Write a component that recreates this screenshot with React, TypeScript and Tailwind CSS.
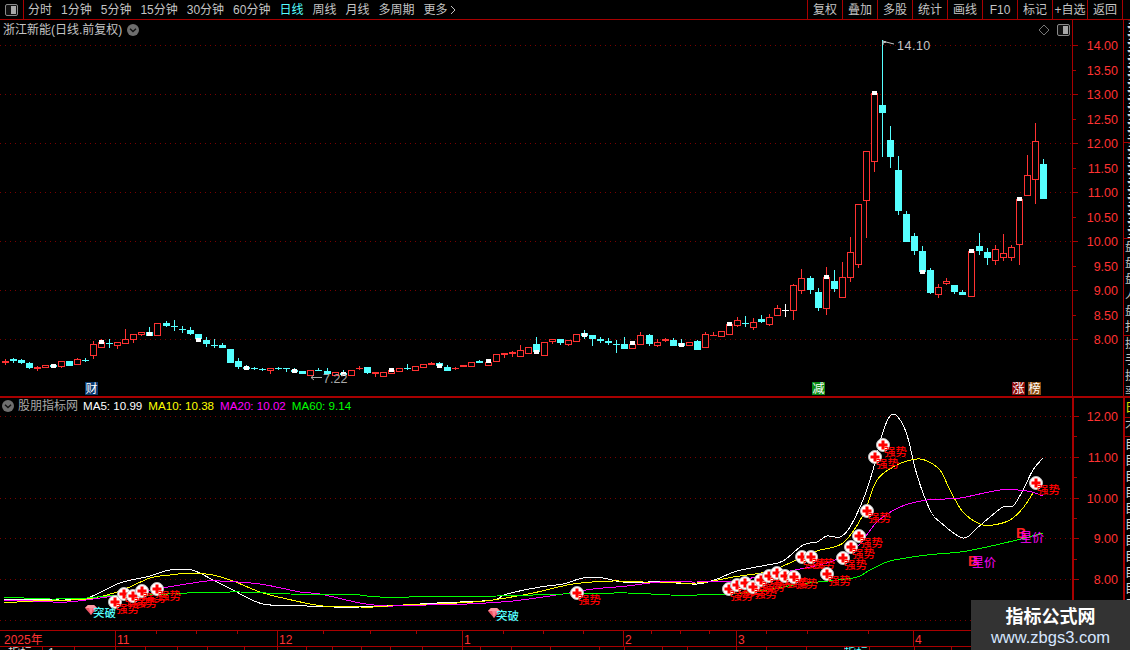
import React from "react";

type C = [string, number, number, number?, number?, number?];
const A: C[] = [
["r",152,158,146,164],["c",147,153,143,158],["c",150,158,148,162],["c",158,173,155,178],["r",171,176,168,182],["h",166,172],["c",165,171,163,173,163],["h",152,167,152,173],["c",153,167],["h",148,163,145,163],
["c",150,150,143,157],["h",103,136,94,146],["h",95,110,87,113,91],["c",100,100,87,113],["h",97,104,97,117],["h",88,98,57,98],["h",73,88,73,98],["h",65,72,65,77],["c",66,77,50,77,66],["h",40,74],
["c",38,48,32,52],["c",49,49,30,62],["c",57,57,47,68],["c",60,72,52,75],["c",72,86,72,90,83],["c",90,103,82,110],["c",105,105,88,113],["c",105,113,100,113],["c",117,159],["c",152,170,145,176],
["c",170,178,165,178,169],["c",174,178,170,180],["c",178,178,173,183],["h",175,181,175,191],["c",174,174,170,179],["c",175,175,175,186],["c",180,186,174,186,178],["c",183,193],["h",181,196],["c",180,180,174,183],
["c",183,192,174,192],["h",187,196],["c",188,194,180,194,186],["h",181,196],["r",173,177,168,180],
["c",171,189,171,191],["r",186,191,186,200],["h",187,197],["h",180,189,180,189,174],["h",175,182],
["c",175,175,163,181],["h",169,179],["h",163,170],["r",159,164,156,164],["c",159,168,156,168,163],["c",171,183,165,183],["r",174,177,170,180],["r",165,170],["h",157,167],["c",153,158,150,158],
["h",155,164,155,164,147],["h",133,152],["r",129,134,129,143],["r",126,131,123,140],["h",121,137,105,137],["h",112,128],["c",102,125,82,125,120],["h",97,134],["h",88,94,88,101],["c",87,99,87,104],
["h",91,101,91,107],["h",73,92],["c",70,78,60,87,68],["c",75,87,75,107],["c",87,92,81,98],["c",93,98,84,105],["c",101,101,90,129],["c",102,117,81,117],["h",103,113,103,113,94],["h",75,101,66,105],
["c",75,102,71,107],["h",96,106,87,110],["r",87,92,84,96],["c",90,107,84,107],["c",100,108,87,108,99],["h",96,104,96,107],["c",93,120,89,120],["h",72,110,66,113],["r",75,77,67,77],["h",64,77],
["h",42,71,42,71,36],["h",31,44,22,52],["c",38,38,18,50],["h",37,52,25,60],["c",27,36,15,40],["h",22,41,12,47],["h",-5,16,-15,16],
];
const B: C[] = [
["w",541,541,522,560],["h",466,541,462,570],["h",445,479,417,492],["c",444,480,438,492],["c",486,533,474,543],["h",441,535,411,555,435],["c",453,477,420,486],["h",442,500,396,500],["h",367,440,321,456],["h",223,403,223,414],
["h",64,211,64,324],["h",-112,92,-112,126,-118],["c",-75,-50,-270,80],["c",30,81,-12,113],["c",120,243,78,255],["c",252,335,243,335],["c",318,362,309,375],["c",363,425,348,425,420],["c",420,489,414,492],["h",472,491,462,504],
["h",454,460,444,465],["c",465,486,465,492],["c",486,495,480,495],["h",363,497,363,500,357],["c",348,363,309,375],["c",366,384,354,405],["h",358,391,345,405],["h",370,380,312,393],["h",351,380,345,393],["h",207,341,207,405,201],
["h",135,194,75,194],["h",33,146,-20,222],["c",102,207,87,207],
];
const conv = (base: number) => (c: C): C => [c[0], base + c[1] / 3, base + c[2] / 3, c[3] === undefined ? undefined : base + c[3] / 3, c[4] === undefined ? undefined : base + c[4] / 3, c[5] === undefined ? undefined : base + c[5] / 3];
const candles = [...A.map(conv(310)), ...B.map(conv(130))];

const RED = "#ff3232";
const CY = "#55ffff";
const LINE = "#a80000";
const DOT = "#7a0000";

function Candle({ c, i }: { c: C; i: number }) {
  const x = Math.round(4.5 + 8.05 * i);
  const [k, t0, b0, wt, wb, cap] = c;
  const t = Math.round(t0);
  const b = Math.round(b0);
  const col = k === "c" ? CY : k === "w" ? "#ffffff" : RED;
  const wickT = Math.round(wt ?? t);
  const wickB = Math.round(wb ?? b);
  return (
    <g>
      <rect x={x} y={wickT} width={1} height={Math.max(1, wickB - wickT)} fill={col} />
      {k === "h" ? (
        <rect x={x - 2.5} y={t + 0.5} width={6} height={Math.max(1, b - t)} fill="#000" stroke={col} />
      ) : (
        <rect x={x - 3} y={t} width={7} height={Math.max(1, b - t)} fill={col} />
      )}
      {cap !== undefined && <rect x={x - 2} y={Math.round(cap)} width={5} height={4} fill="#fff" />}
    </g>
  );
}

// Catmull-Rom smoothing of a data series into a cubic path
const smooth = (a: number[][]) => {
  let d = `M${a[0][0]} ${a[0][1]}`;
  for (let i = 0; i < a.length - 1; i++) {
    const p0 = a[Math.max(0, i - 1)];
    const p1 = a[i];
    const p2 = a[i + 1];
    const p3 = a[Math.min(a.length - 1, i + 2)];
    const c1x = p1[0] + (p2[0] - p0[0]) / 6;
    const c1y = p1[1] + (p2[1] - p0[1]) / 6;
    const c2x = p2[0] - (p3[0] - p1[0]) / 6;
    const c2y = p2[1] - (p3[1] - p1[1]) / 6;
    d += ` C${c1x.toFixed(1)} ${c1y.toFixed(1)} ${c2x.toFixed(1)} ${c2y.toFixed(1)} ${p2[0]} ${p2[1]}`;
  }
  return d;
};
const white = [[4,600],[60,599],[87,598],[120,583],[150,576],[170,570],[192,570],[213,580],[233,590],[263,604],[307,606],[333,607],[360,607],[403,605],[437,603],[460,602],[493,600],[507,594],[540,587],[563,584],[583,578],[603,578],[623,582],[660,582],[697,584],[717,579],[737,571],[767,565],[783,561],[803,545],[817,542],[827,536],[840,537],[850,527],[863,500],[873,470],[882,435],[890,416],[898,417],[907,435],[917,475],[930,510],[940,522],[963,538],[977,528],[990,517],[1003,507],[1013,506],[1023,490],[1033,470],[1043,458]];
const yellow = [[4,603],[33,601],[87,599],[120,591],[150,578],[170,575],[190,573],[213,575],[233,581],[260,592],[287,599],[323,606],[360,607],[373,607],[403,605],[437,604],[473,602],[493,600],[533,593],[573,584],[613,581],[643,582],[697,583],[723,579],[733,577],[767,572],[783,566],[817,551],[843,543],[863,515],[877,480],[897,465],[917,459],[927,461],[940,470],[950,490],[963,512],[980,524],[993,525],[1010,520],[1023,508],[1033,493]];
const magenta = [[4,600],[33,601],[67,602],[107,597],[150,590],[180,585],[207,581],[220,581],[260,584],[300,592],[320,594],[360,603],[387,606],[427,605],[467,604],[513,601],[563,594],[593,589],[627,586],[660,582],[697,582],[733,581],[767,575],[800,569],[833,561],[857,547],[877,522],[900,507],[927,500],[960,498],[1000,490],[1027,491],[1043,496]];
const green = [[4,597],[50,599],[87,598],[107,596],[150,595],[187,593],[240,592],[290,594],[360,595],[380,597],[497,596],[563,594],[627,593],[670,595],[697,595],[733,594],[767,590],[800,584],[853,578],[870,570],[890,561],[927,555],[967,551],[1017,540],[1043,533]];

const marks = [[115,602],[124,594],[133,596],[142,591],[157,589],[577,593],[729,589],[737,585],[745,583],[753,587],[761,580],[769,576],[777,573],[785,576],[794,577],[802,557],[811,557],[827,574],[843,558],[851,547],[859,536],[867,511],[875,457],[883,445],[1036,483]];

const hTicks = [14, 13.5, 13, 12.5, 12, 11.5, 11, 10.5, 10, 9.5, 9, 8.5, 8];
const yP = (p: number) => Math.round(339.3 - 49.05 * (p - 8));
const yI = (p: number) => Math.round(579 - 40.75 * (p - 8));

function Dots({ ys }: { ys: number[] }) {
  return (
    <>
      {ys.map((y) => (
        <line key={y} x1={0} x2={1072} y1={y + 0.5} y2={y + 0.5} stroke={DOT} strokeDasharray="1 4" />
      ))}
    </>
  );
}

function Axis({ y0, h, items, w }: { y0: number; h: number; items: { y: number; t: string; major: boolean; show: boolean }[]; w: number }) {
  return (
    <svg width={w} height={h} viewBox={`0 ${y0} ${w} ${h}`} className="block" shapeRendering="crispEdges">
      {items.map((it) => (
        <g key={it.y}>
          <rect x={0} y={it.y} width={it.major ? 5 : 3} height={1} fill={LINE} />
          {it.show && (
            <text x={w - 5} y={it.y + 5} fontSize={12.5} textAnchor="end" fill={RED}>
              {it.t}
            </text>
          )}
        </g>
      ))}
    </svg>
  );
}

function Badge({ t, bg, cls }: { t: string; bg: string; cls: string }) {
  return (
    <div className={`absolute top-[362px] w-[13px] h-[13px] flex items-center justify-center text-[12px] leading-none text-white ${bg} ${cls}`}>{t}</div>
  );
}

const Chevron = () => (
  <svg width="12" height="12" viewBox="0 0 12 12" className="block shrink-0">
    <circle cx="6" cy="6" r="6" fill="#6e6e6e" />
    <path d="M3 4.8 L6 7.6 L9 4.8" fill="none" stroke="#111" strokeWidth="1.4" />
  </svg>
);

const PanelIcon = () => (
  <svg width="13" height="12" viewBox="0 0 13 12" className="block">
    <rect x="0.5" y="0.5" width="12" height="11" rx="1.5" fill="#111" stroke="#8a8a8a" />
    <rect x="6" y="2" width="5" height="8" fill="#a8a8a8" />
  </svg>
);

const tabs = ["分时", "1分钟", "5分钟", "15分钟", "30分钟", "60分钟", "日线", "周线", "月线", "多周期"];
const tools = ["复权", "叠加", "多股", "统计", "画线", "F10", "标记", "+自选", "返回"];
const botTicks = [42,74,115,145,177,207,244,277,306,332,361,390,422,462,480,511,550,599,624,662,687,736,766,806,844,869,914,951];
const topTicks = [156,196,237,323,370,416,503,543,583,651,680,709,766,807,868];
const majors = [[115,"11"],[277,"12"],[462,"1"],[623,"2"],[736,"3"],[913,"4"]] as [number,string][];

export default function App() {
  return (
    <div className="relative w-[1130px] h-[650px] overflow-hidden bg-black flex flex-col font-['Liberation_Sans','Noto_Sans_CJK_SC',sans-serif] text-[12px] text-[#c4c4c4]">
      <div className="h-[20px] shrink-0 flex border-b border-[#a80000]">
        <div className="w-[24px] border-r border-[#a80000] flex items-center justify-center"><PanelIcon /></div>
        <div className="flex items-center gap-[9px] pl-[4px] leading-none">
          {tabs.map((t) => (
            <span key={t} className={t === "日线" ? "text-[#55ffff]" : ""}>{t}</span>
          ))}
          <span className="flex items-center">更多
            <svg width="8" height="10" viewBox="0 0 8 10" className="ml-[1px]"><path d="M2 1 L6 5 L2 9" fill="none" stroke="#c4c4c4" /></svg>
          </span>
        </div>
        <div className="ml-auto flex mr-[7px]">
          {tools.map((t) => (
            <div key={t} className="w-[35px] h-full border-l border-[#a80000] flex items-center justify-center leading-none">{t}</div>
          ))}
          <div className="border-l border-[#a80000]" />
        </div>
      </div>

      <div className="h-[378px] shrink-0 flex border-b-2 border-[#a80000]">
        <div className="relative w-[1072px]">
          <svg width="1072" height="376" viewBox="0 20 1072 376" className="block">
            <Dots ys={[14,13,12,11,10,9,8].map(yP)} />
            <g shapeRendering="crispEdges">
              {candles.map((c, i) => <Candle key={i} c={c} i={i} />)}
            </g>
            <path d="M883 45 V41 L886 42 L883 43 M884 41.5 L894 44" fill="none" stroke="#c4c4c4" />
            <text x="897" y="50" fontSize="12.5" fill="#c4c4c4" letterSpacing="0.5">14.10</text>
            <path d="M322 377.5 H311 M314 375 L311 377.5 L314 380" fill="none" stroke="#aaa" />
            <text x="323" y="383" fontSize="12.5" fill="#aaa">7.22</text>
            <path d="M1044 25 L1049 30 L1044 35 L1039 30 Z" fill="none" stroke="#777" />
          </svg>
          <div className="absolute left-[3px] top-[2px] flex items-center gap-[5px] leading-[16px]">
            <span>浙江新能(日线.前复权)</span>
            <Chevron />
          </div>
          <div className="absolute left-[1057px] top-[4px]"><PanelIcon /></div>
          <Badge t="财" bg="bg-[#0b3a70]" cls="left-[85px]" />
          <Badge t="减" bg="bg-[#0a8a14]" cls="left-[812px]" />
          <Badge t="涨" bg="bg-[#8a0808]" cls="left-[1012px]" />
          <Badge t="榜" bg="bg-[#8a4a10]" cls="left-[1028px]" />
        </div>
        <div className="w-[51px] border-l border-[#a80000]">
          <Axis y0={20} h={376} w={50} items={hTicks.map((p) => ({ y: yP(p), t: p.toFixed(2), major: Number.isInteger(p), show: true }))} />
        </div>
        <div className="w-[7px] overflow-hidden border-l border-[#a80000] flex flex-col">
          <div className="h-[123px] pl-[3px] border-b border-[#a80000] overflow-hidden text-[10px] leading-[8px] font-bold text-[#d8d8d8]">
            {Array.from({ length: 15 }).map((_, i) => <div key={i}>三</div>)}
          </div>
          <div className="h-[96px] pl-[3px] border-b border-[#a80000] overflow-hidden text-[10px] leading-[8px] font-bold text-[#d8d8d8]">
            {Array.from({ length: 12 }).map((_, i) => <div key={i}>三</div>)}
          </div>
          <div className="h-[97px] pl-[1px] border-b border-[#a80000] overflow-hidden text-[12px] leading-[16px] text-[#c4c4c4] whitespace-nowrap">
            {"盘盘盘人盘打".split("").map((t, i) => <div key={i}>{t}</div>)}
          </div>
          <div className="flex-1 pl-[1px] overflow-hidden text-[12px] leading-[16px] whitespace-nowrap">
            {"换手换率额指".split("").map((t, i) => <div key={i}>{t}</div>)}
          </div>
        </div>
      </div>

      <div className="h-[232px] shrink-0 flex">
        <div className="relative w-[1072px]">
          <svg width="1072" height="232" viewBox="0 398 1072 232" className="block">
            <Dots ys={[12,11,10,9,8,7].map(yI)} />
            <g fill="none" shapeRendering="crispEdges">
              <path d={smooth(white)} stroke="#ffffff" />
              <path d={smooth(yellow)} stroke="#ffff00" />
              <path d={smooth(magenta)} stroke="#ff00ff" />
              <path d={smooth(green)} stroke="#00ff00" />
            </g>
            {marks.map(([x, y], i) => (
              <g key={i}>
                <circle cx={x} cy={y} r={6.5} fill="#ffffff" stroke="#bdbdbd" />
                <rect x={x - 4.5} y={y - 1.5} width={9} height={3} fill="#ff0000" />
                <rect x={x - 1.5} y={y - 4.5} width={3} height={9} fill="#ff0000" />
                <text x={x + 1} y={y + 11} fontSize={11.5} fontWeight={500} fill="#ff0000">强势</text>
              </g>
            ))}
            {[[91,610],[494,613]].map(([x, y], i) => (
              <g key={i}>
                <path d={`M${x-6} ${y-2} L${x-3} ${y-5} H${x+3} L${x+6} ${y-2} L${x} ${y+5} Z`} fill="#ee5566" />
                <path d={`M${x-6} ${y-2} H${x+6} L${x+3} ${y-5} H${x-3} Z`} fill="#ff9aa5" />
                <path d={`M${x-2} ${y-2} L${x} ${y+5} L${x+2} ${y-2} Z`} fill="#ff8090" />
                <text x={x + 2} y={y + 7} fontSize={11.5} fontWeight={500} fill="#55ffff">突破</text>
              </g>
            ))}
            {[[968,566,1],[1016,538,4]].map(([x, y, o], i) => (
              <g key={i}>
                <text x={x} y={y} fontSize={14} fill="#ff2020" fontWeight="700">B</text>
                <text x={x + 4} y={y + o} fontSize={12} fill="#ff00ff">星价</text>
              </g>
            ))}
          </svg>
          <div className="absolute left-[2px] top-0 h-[16px] flex items-center leading-none text-[11.6px]">
            <Chevron />
            <span className="ml-[4px] text-[12px] text-[#a8a8a8]">股朋指标网</span>
            <span className="ml-[5px] text-white">MA5: 10.99</span>
            <span className="ml-[6px] text-[#ffff00]">MA10: 10.38</span>
            <span className="ml-[6px] text-[#ff00ff]">MA20: 10.02</span>
            <span className="ml-[6px] text-[#00ff00]">MA60: 9.14</span>
          </div>
        </div>
        <div className="w-[51px] border-l-2 border-[#a80000]">
          <Axis y0={398} h={232} w={49} items={[12,11.5,11,10.5,10,9.5,9,8.5,8].map((p) => ({ y: yI(p), t: p.toFixed(2), major: Number.isInteger(p), show: Number.isInteger(p) }))} />
        </div>
        <div className="w-[7px] overflow-hidden border-l-2 border-[#a80000] flex flex-col whitespace-nowrap">
          <div className="h-[20px] border-b border-[#a80000] text-[12px] leading-[20px] text-[#e0e000]">日</div>
          <div className="h-[19px] border-b border-[#a80000] text-[12px] leading-[19px]">不</div>
          <div className="flex-1 overflow-hidden text-[12px] leading-[16px] text-[#d8d8d8]">
            {Array.from({ length: 12 }).map((_, i) => <div key={i}>目</div>)}
          </div>
        </div>
      </div>

      <div className="h-[17px] shrink-0 border-y border-[#a80000]">
        <svg width="1130" height="15" viewBox="0 631 1130 15" className="block">
          <g shapeRendering="crispEdges">
            {topTicks.map((x) => <rect key={x} x={x} y={631} width={1} height={3} fill={LINE} />)}
            {majors.map(([x]) => <rect key={x} x={x} y={631} width={1} height={15} fill={LINE} />)}
          </g>
          <text x="4" y="644" fontSize="12" fill={RED}>2025年</text>
          {majors.map(([x, t]) => <text key={t} x={x + 2} y="644" fontSize="12" fill={RED}>{t}</text>)}
        </svg>
      </div>
      <svg width="1130" height="3" viewBox="0 647 1130 3" className="block shrink-0">
        {botTicks.map((x) => <rect key={x} x={x} y={647} width={1} height={3} fill={LINE} />)}
        <text x="8" y="657" fontSize="12" fill="#d8d8d8">指标</text>
        <text x="48" y="657" fontSize="12" fill="#d8d8d8">1</text>
        <text x="844" y="657" fontSize="12" fill="#55ffff">指标</text>
      </svg>

      <div className="absolute left-[971px] top-[600px] w-[159px] h-[50px] bg-[#333333] flex flex-col items-center pt-[3px]">
        <div className="text-[18px] leading-[24px] font-bold text-white font-['Noto_Sans_CJK_SC',sans-serif]">指标公式网</div>
        <div className="text-[16.5px] leading-[20px] text-[#d6e6ff] font-['Liberation_Sans',sans-serif]">www.zbgs3.com</div>
      </div>
    </div>
  );
}
